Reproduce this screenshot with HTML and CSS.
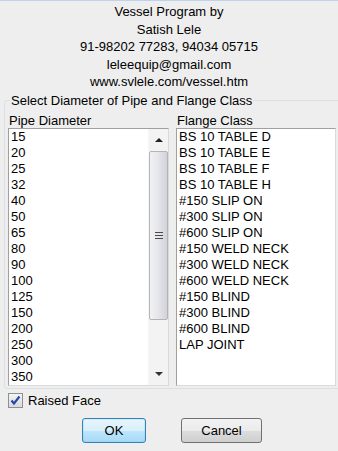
FILE: index.html
```html
<!doctype html>
<html lang="en-US">
  <head>
    <meta charset="utf-8" />
    <title>Vessel Program</title>
    <link rel="stylesheet" href="styles.css">
  </head>
  <body>
<div class="about">
  <div>Vessel Program by</div>
  <div>Satish Lele</div>
  <div>91-98202 77283, 94034 05715</div>
  <div>leleequip@gmail.com</div>
  <div>www.svlele.com/vessel.htm</div>
</div>

<fieldset class="group">
  <legend>Select Diameter of Pipe and Flange Class</legend>
  <div class="cols">
    <div class="caption">Pipe Diameter</div>
    <div class="caption">Flange Class</div>

    <div class="listbox">
      <ul>
        <li>15</li>
        <li>20</li>
        <li>25</li>
        <li>32</li>
        <li>40</li>
        <li>50</li>
        <li>65</li>
        <li>80</li>
        <li>90</li>
        <li>100</li>
        <li>125</li>
        <li>150</li>
        <li>200</li>
        <li>250</li>
        <li>300</li>
        <li>350</li>
      </ul>
      <div class="scroll">
        <div class="arrow"><span class="up"></span></div>
        <div class="track">
          <div class="thumb"><span class="grip"></span></div>
        </div>
        <div class="arrow"><span class="down"></span></div>
      </div>
    </div>

    <div class="listbox">
      <ul>
        <li>BS 10 TABLE D</li>
        <li>BS 10 TABLE E</li>
        <li>BS 10 TABLE F</li>
        <li>BS 10 TABLE H</li>
        <li>#150 SLIP ON</li>
        <li>#300 SLIP ON</li>
        <li>#600 SLIP ON</li>
        <li>#150 WELD NECK</li>
        <li>#300 WELD NECK</li>
        <li>#600 WELD NECK</li>
        <li>#150 BLIND</li>
        <li>#300 BLIND</li>
        <li>#600 BLIND</li>
        <li>LAP JOINT</li>
      </ul>
    </div>
  </div>
</fieldset>

<div class="checkrow">
  <span class="checkbox">
    <svg width="11" height="11" viewBox="0 0 11 11"><path d="M1.5 5.5 L4 8.5 L9.5 1.5" fill="none" stroke="#2a46a8" stroke-width="2.2"/></svg>
  </span>
  <span>Raised Face</span>
</div>

<div class="buttons">
  <div class="btn ok">OK</div>
  <div class="btn cancel">Cancel</div>
</div>
  </body>
</html>
```

FILE: styles.css
```css
html, body {
  margin: 0;
  padding: 0;
}

body {
  width: 338px;
  height: 451px;
  overflow: hidden;
  box-sizing: border-box;
  background-color: #eeeeee;
  border-top: 1px solid #bcd3ec;
  font-family: "Liberation Sans", Arial, sans-serif;
  font-size: 13px;
  color: #000;
}

.about {
  padding-top: 2px;
  text-align: center;
  line-height: 17.5px;
}

.group {
  margin: 2px -12px 0 4px;
  padding: 5px 3px 2px 3px;
  border: 1px solid #d8e0e6;
  border-radius: 3px;
}

.group legend {
  margin-left: 2px;
  padding: 0 1px;
  line-height: 15px;
}

.cols {
  display: grid;
  grid-template-columns: 161px 160px;
  column-gap: 7px;
}

.caption {
  line-height: 15px;
  padding-left: 1px;
}

.listbox {
  display: flex;
  height: 258px;
  box-sizing: border-box;
  background-color: #fff;
  border: 1px solid;
  border-color: #a0a0a0 #dadada #dadada #a0a0a0;
}

.listbox ul {
  flex: 1;
  margin: 0;
  padding: 0 0 0 2px;
  list-style: none;
  line-height: 16px;
}

.scroll {
  width: 19px;
  display: flex;
  flex-direction: column;
  background-color: #f3f3f3;
  border-left: 1px solid #f7f7f7;
}

.arrow {
  height: 19px;
  display: flex;
  align-items: center;
  justify-content: center;
}

.up {
  width: 0;
  height: 0;
  border-left: 4px solid transparent;
  border-right: 4px solid transparent;
  border-bottom: 4px solid #222;
  margin-top: 3px;
}

.down {
  width: 0;
  height: 0;
  border-left: 4px solid transparent;
  border-right: 4px solid transparent;
  border-top: 4px solid #333;
  margin-bottom: 2px;
}

.track {
  flex: 1;
}

.thumb {
  margin-top: 3px;
  height: 169px;
  box-sizing: border-box;
  border: 1px solid #b4b4b8;
  border-radius: 2px;
  background: linear-gradient(to right, #f2f2f4, #e6e7eb 45%, #d2d3d9);
  display: flex;
  align-items: center;
  justify-content: center;
}

.grip {
  width: 8px;
  height: 7px;
  background: repeating-linear-gradient(to bottom, #4a4a4a 0, #4a4a4a 1px, transparent 1px, transparent 3px);
}

.checkrow {
  display: flex;
  align-items: center;
  gap: 5px;
  margin: 4px 0 0 8px;
  height: 15px;
}

.checkbox {
  width: 15px;
  height: 15px;
  box-sizing: border-box;
  border: 1px solid #8e8f8f;
  background: linear-gradient(#f4f4f4, #d9dadb);
  display: flex;
  align-items: center;
  justify-content: center;
}

.buttons {
  display: flex;
  gap: 35px;
  margin-top: 10px;
  padding-left: 82px;
}

.btn {
  height: 25px;
  box-sizing: border-box;
  border-radius: 3px;
  display: flex;
  align-items: center;
  justify-content: center;
}

.ok {
  width: 64px;
  border: 1px solid #3c7fb1;
  background: linear-gradient(#e8f5fc 0, #d9effa 50%, #bee6fd 51%, #a7d9f5 100%);
  box-shadow: inset 0 0 0 1px #48d0fb33;
}

.cancel {
  width: 81px;
  border: 1px solid #707070;
  background: linear-gradient(#f2f2f2 0, #ebebeb 50%, #dddddd 51%, #cfcfcf 100%);
}
```
